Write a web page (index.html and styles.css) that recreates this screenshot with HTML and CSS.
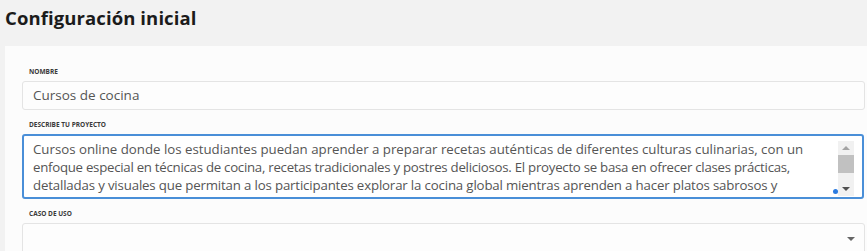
FILE: index.html
```html
<!DOCTYPE html>
<html lang="es">
<head>
<meta charset="utf-8">
<link rel="stylesheet" href="styles.css">
</head>
<body>
<div class="page">
  <h1 class="title">Configuración inicial</h1>
  <div class="card">
    <div class="field">
      <div class="label">NOMBRE</div>
      <div class="input">Cursos de cocina</div>
    </div>
    <div class="field">
      <div class="label">DESCRIBE TU PROYECTO</div>
      <div class="textarea">
        <div class="ta-text">
          <div class="line">Cursos online donde los estudiantes puedan aprender a preparar recetas auténticas de diferentes culturas culinarias, con un</div>
          <div class="line tight">enfoque especial en técnicas de cocina, recetas tradicionales y postres deliciosos. El proyecto se basa en ofrecer clases prácticas,</div>
          <div class="line snug">detalladas y visuales que permitan a los participantes explorar la cocina global mientras aprenden a hacer platos sabrosos y</div>
        </div>
        <div class="dot"></div>
        <div class="scrollbar">
          <div class="arrow up"></div>
          <div class="thumb"></div>
          <div class="track"></div>
          <div class="arrow down"></div>
        </div>
      </div>
    </div>
    <div class="field">
      <div class="label">CASO DE USO</div>
      <div class="select"><span class="caret"></span></div>
    </div>
  </div>
</div>
</body>
</html>
```
FILE: styles.css
```css
* { box-sizing: border-box; }
html, body { margin: 0; padding: 0; }
body {
  background: #f2f2f2;
  font-family: "Open Sans", "Noto Sans", sans-serif;
  width: 867px;
  height: 251px;
  overflow: hidden;
}
.page { padding: 0 0 0 5px; }
.title {
  margin: 0;
  height: 46px;
  padding-top: 5px;
  font-size: 18.5px;
  font-weight: 700;
  color: #1b1b1b;
  letter-spacing: 0.1px;
}
.card {
  background: #fcfcfc;
  padding: 20px 0 0 17px;
  display: flex;
  flex-direction: column;
  gap: 9px;
}
.field { display: flex; flex-direction: column; }
.label {
  font-size: 6.5px;
  font-weight: 700;
  color: #3a3a3a;
  height: 15px;
  padding-left: 7px;
  line-height: 12px;
}
.input {
  height: 29px;
  border: 1px solid #e4e4e4;
  border-radius: 3px;
  background: #fdfdfd;
  font-size: 13.5px;
  color: #555;
  padding: 0 10px;
  line-height: 27px;
  margin-right: 2px;
}
.textarea {
  position: relative;
  height: 65px;
  border: 2px solid #4a8fd8;
  border-radius: 3px;
  background: #fff;
  display: flex;
  margin-right: 3px;
  overflow: hidden;
}
.ta-text {
  flex: 1;
  font-size: 13.25px;
  line-height: 18px;
  color: #555;
  padding: 4px 10px 0 9px;
  white-space: nowrap;
  overflow: hidden;
}
.line.tight { letter-spacing: -0.27px; }
.line.snug { letter-spacing: -0.16px; }
.scrollbar {
  width: 16px;
  margin: 5px 8px 1px 0;
  display: flex;
  flex-direction: column;
  background: #f1f1f1;
}
.arrow { height: 14px; position: relative; }
.arrow.up::after {
  content: ""; position: absolute; left: 4px; top: 5px;
  border-left: 4px solid transparent; border-right: 4px solid transparent;
  border-bottom: 4px solid #a3a3a3;
}
.arrow.down::after {
  content: ""; position: absolute; left: 4px; top: 5px;
  border-left: 4px solid transparent; border-right: 4px solid transparent;
  border-top: 4px solid #505050;
}
.thumb { height: 18px; background: #c1c1c1; }
.track { flex: 1; }
.dot {
  position: absolute;
  right: 24px; bottom: 3px;
  width: 5px; height: 5px;
  border-radius: 50%;
  background: #2b7be0;
}
.select {
  height: 31px;
  border: 1px solid #e4e4e4;
  border-radius: 3px;
  background: #fdfdfd;
  margin-right: 2px;
  position: relative;
}
.caret {
  position: absolute;
  right: 9px; top: 13px;
  border-left: 4px solid transparent; border-right: 4px solid transparent;
  border-top: 4px solid #666;
}
```
